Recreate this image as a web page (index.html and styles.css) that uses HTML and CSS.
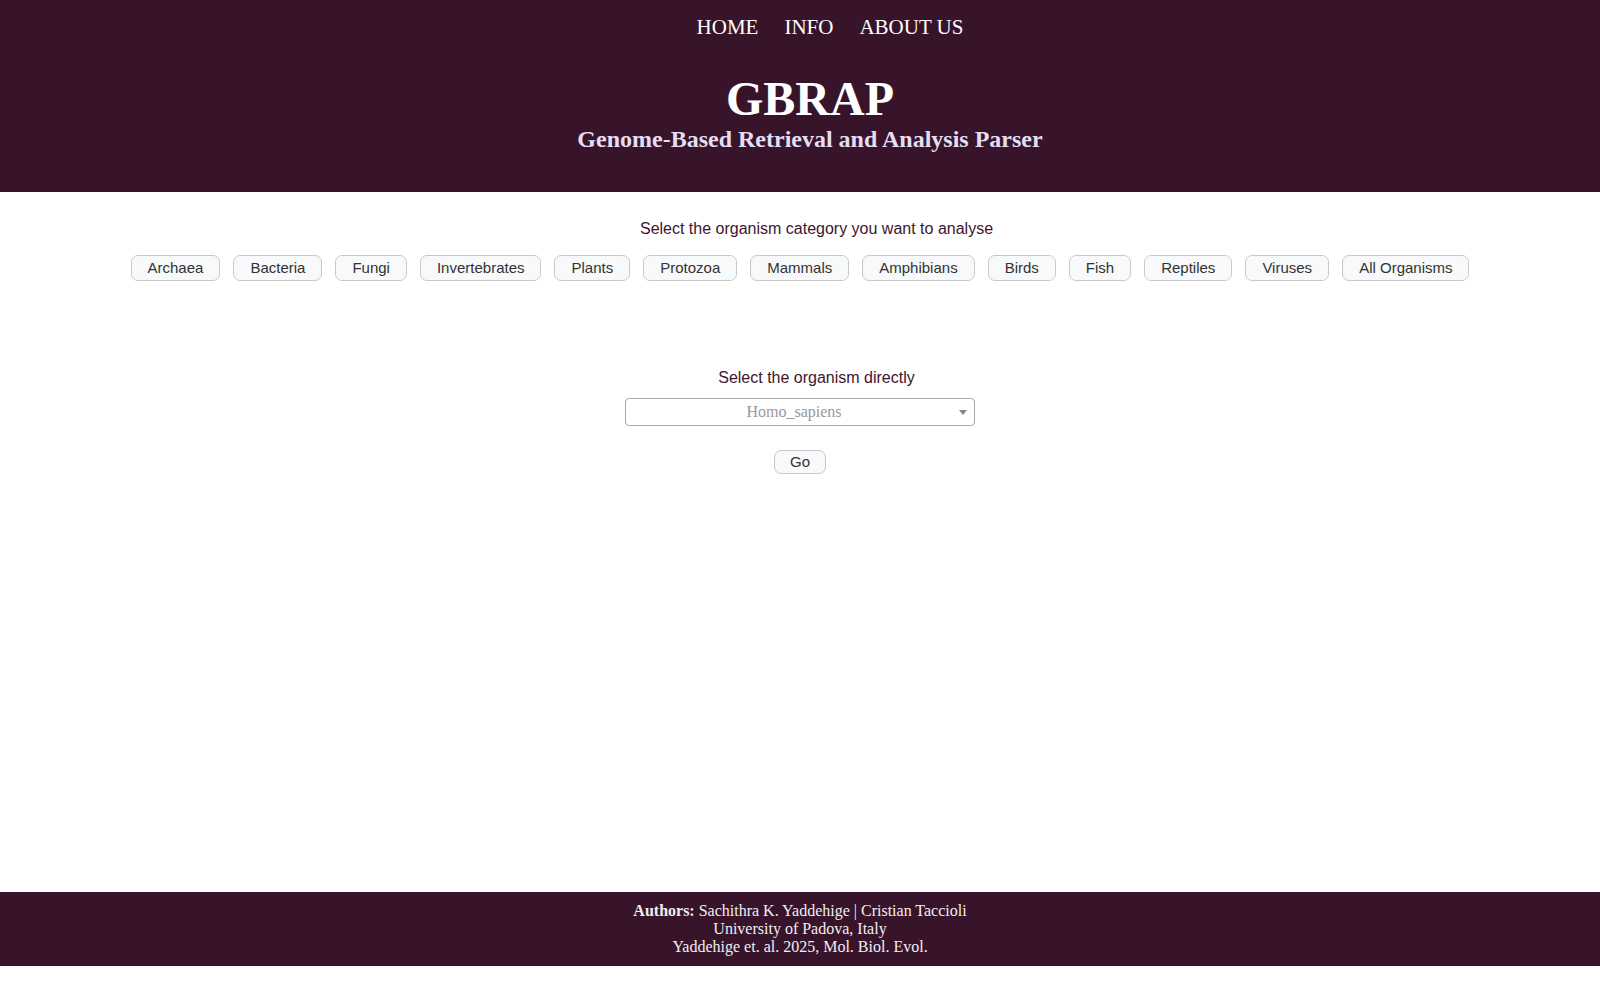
FILE: index.html
```html
<!DOCTYPE html>
<html lang="en">
<head>
<meta charset="utf-8">
<title>GBRAP</title>
<link rel="stylesheet" href="styles.css">
</head>
<body>
<header class="site-header">
  <nav class="nav">
    <a href="#" class="nav-link">HOME</a>
    <a href="#" class="nav-link">INFO</a>
    <a href="#" class="nav-link">ABOUT US</a>
  </nav>
  <div class="brand">
    <h1 class="title">GBRAP</h1>
    <p class="subtitle">Genome-Based Retrieval and Analysis Parser</p>
  </div>
</header>
<main class="main">
  <section class="category">
    <p class="label">Select the organism category you want to analyse</p>
    <div class="cat-list">
      <button class="btn">Archaea</button>
      <button class="btn">Bacteria</button>
      <button class="btn">Fungi</button>
      <button class="btn">Invertebrates</button>
      <button class="btn">Plants</button>
      <button class="btn">Protozoa</button>
      <button class="btn">Mammals</button>
      <button class="btn">Amphibians</button>
      <button class="btn">Birds</button>
      <button class="btn">Fish</button>
      <button class="btn">Reptiles</button>
      <button class="btn">Viruses</button>
      <button class="btn">All Organisms</button>
    </div>
  </section>
  <section class="direct">
    <p class="label">Select the organism directly</p>
    <div class="select">
      <span class="select-text">Homo_sapiens</span>
      <span class="select-arrow"></span>
    </div>
    <button class="btn go">Go</button>
  </section>
</main>
<footer class="site-footer">
  <div><b>Authors:</b> Sachithra K. Yaddehige | Cristian Taccioli</div>
  <div>University of Padova, Italy</div>
  <div>Yaddehige et. al. 2025, Mol. Biol. Evol.</div>
</footer>
</body>
</html>
```

FILE: styles.css
```css
html, body {
  margin: 0;
  padding: 0;
  background: #ffffff;
}
body {
  font-family: "Liberation Serif", "Times New Roman", serif;
}
.site-header {
  background: #38142b;
  height: 192px;
  box-sizing: border-box;
  padding-top: 14px;
  text-align: center;
}
.nav {
  display: flex;
  justify-content: center;
  gap: 26px;
  height: 26px;
  line-height: 26px;
  padding-left: 60px;
}
.nav-link {
  color: #ffffff;
  text-decoration: none;
  font-size: 21px;
}
.brand {
  padding-left: 20px;
}
.title {
  margin: 32px 0 0 0;
  color: #ffffff;
  font-size: 48px;
  line-height: 53px;
  font-weight: bold;
}
.subtitle {
  margin: 0;
  color: #e4def2;
  font-size: 24px;
  line-height: 28px;
  font-weight: bold;
}
.main {
  min-height: 700px;
  font-family: "Liberation Sans", Arial, sans-serif;
  text-align: center;
}
.label {
  margin: 0;
  color: #3d1530;
  font-size: 16px;
  line-height: 20px;
  padding-left: 33px;
}
.category {
  padding-top: 27px;
}
.cat-list {
  display: flex;
  justify-content: center;
  gap: 13px;
  margin-top: 16px;
}
.btn {
  font-family: "Liberation Sans", Arial, sans-serif;
  font-size: 15px;
  line-height: 18px;
  color: #333333;
  background: #f8f9fa;
  border: 1px solid #c9c9c9;
  border-radius: 7px;
  padding: 3px 16px;
  margin: 0;
}
.direct {
  margin-top: 87px;
  display: flex;
  flex-direction: column;
  align-items: center;
}
.select {
  margin-top: 10px;
  width: 350px;
  height: 28px;
  box-sizing: border-box;
  border: 1px solid #aaaaaa;
  border-radius: 4px;
  display: flex;
  align-items: center;
  position: relative;
  padding-right: 12px;
}
.select-text {
  flex: 1;
  font-family: "Liberation Serif", "Times New Roman", serif;
  font-size: 16px;
  color: #999999;
  text-align: center;
}
.select-arrow {
  position: absolute;
  right: 7px;
  top: 11px;
  width: 0;
  height: 0;
  border-left: 4px solid transparent;
  border-right: 4px solid transparent;
  border-top: 5px solid #888888;
}
.go {
  margin-top: 24px;
  padding: 2px 15px;
}
.site-footer {
  background: #38142b;
  color: #f2eef2;
  font-size: 16px;
  line-height: 18px;
  padding: 10px 0;
  text-align: center;
}
```
